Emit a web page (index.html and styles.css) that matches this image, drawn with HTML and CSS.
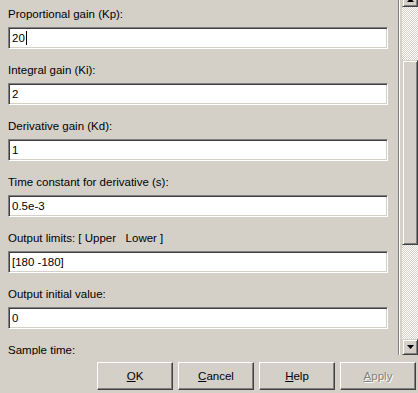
FILE: index.html
```html
<!DOCTYPE html>
<html>
<head>
<meta charset="utf-8">
<link rel="stylesheet" href="styles.css">
</head>
<body>
<div class="dialog">
  <div class="scroller">
    <div class="content">
      <div class="param"><div class="label">Proportional gain (Kp):</div><div class="field">20<span class="caret"></span></div></div>
      <div class="param"><div class="label">Integral gain (Ki):</div><div class="field">2</div></div>
      <div class="param"><div class="label">Derivative gain (Kd):</div><div class="field">1</div></div>
      <div class="param"><div class="label">Time constant for derivative (s):</div><div class="field">0.5e-3</div></div>
      <div class="param"><div class="label">Output limits: [ Upper &nbsp; Lower ]</div><div class="field">[180 -180]</div></div>
      <div class="param"><div class="label">Output initial value:</div><div class="field">0</div></div>
      <div class="param"><div class="label">Sample time:</div></div>
    </div>
    <div class="vline"></div>
    <div class="scrollbar">
      <div class="sbtn up"><svg width="7" height="4" viewBox="0 0 7 4"><path d="M3.5 0 L7 4 L0 4 Z" fill="#000"/></svg></div>
      <div class="track">
        <div class="gap-top"></div>
        <div class="thumb"></div>
        <div class="gap-bottom"></div>
      </div>
      <div class="sbtn down"><svg width="7" height="4" viewBox="0 0 7 4"><path d="M0 0 L7 0 L3.5 4 Z" fill="#000"/></svg></div>
    </div>
  </div>
  <div class="buttons">
    <div class="btn"><span class="u">O</span>K</div>
    <div class="btn"><span class="u">C</span>ancel</div>
    <div class="btn"><span class="u">H</span>elp</div>
    <div class="btn disabled"><span class="u">A</span>pply</div>
  </div>
</div>
</body>
</html>
```
FILE: styles.css
```css
html, body {
  margin: 0;
  padding: 0;
  background: #d4d0c8;
}
body {
  width: 418px;
  height: 393px;
  overflow: hidden;
  font-family: "Liberation Sans", Arial, sans-serif;
  font-size: 11.5px;
  color: #000;
}
.dialog {
  display: flex;
  flex-direction: column;
  height: 393px;
}
.scroller {
  display: flex;
  height: 355px;
  overflow: hidden;
}
.content {
  flex: 1;
  display: flex;
  flex-direction: column;
  padding: 7px 0 0 8px;
  overflow: hidden;
}
.param {
  display: flex;
  flex-direction: column;
  margin-bottom: 14px;
  flex: none;
}
.label {
  line-height: 14px;
  height: 14px;
  margin-bottom: 6px;
  white-space: nowrap;
}
.field {
  width: 375px;
  height: 20px;
  border: 1px solid;
  border-color: #808080 #fff #fff #808080;
  box-shadow: inset 1px 1px #404040, inset -1px -1px #d4d0c8;
  background: #fff;
  padding: 0 0 0 3px;
  line-height: 21px;
  white-space: nowrap;
}
.caret {
  display: inline-block;
  width: 1px;
  height: 14px;
  background: #000;
  vertical-align: -3px;
  margin-left: 1px;
}
.vline {
  width: 1px;
  background: #808080;
  margin-left: 10px;
  border-right: 1px solid #fff;
}
.scrollbar {
  width: 16px;
  margin-left: 2px;
  display: flex;
  flex-direction: column;
}
.sbtn {
  height: 14px;
  flex: none;
  border: 1px solid;
  border-color: #d4d0c8 #404040 #404040 #d4d0c8;
  box-shadow: inset 1px 1px #fff, inset -1px -1px #808080;
  background: #d4d0c8;
  display: flex;
  align-items: center;
  justify-content: center;
}
.sbtn.up {
  margin-top: -9px;
}
.sbtn.up svg { margin-top: 1px; }
.track {
  flex: 1;
  display: flex;
  flex-direction: column;
  background: repeating-conic-gradient(#fff 0 25%, #d4d0c8 0 50%) 0 0 / 2px 2px;
}
.gap-top { height: 53px; flex: none; }
.thumb {
  height: 183px;
  flex: none;
  border: 1px solid;
  border-color: #d4d0c8 #404040 #404040 #d4d0c8;
  box-shadow: inset 1px 1px #fff, inset -1px -1px #808080;
  background: #d4d0c8;
}
.gap-bottom { flex: 1; }
.buttons {
  display: flex;
  justify-content: flex-end;
  gap: 5px;
  padding: 7px 2px 0 0;
}
.btn {
  width: 74px;
  height: 26px;
  border: 1px solid;
  border-color: #fff #404040 #404040 #fff;
  box-shadow: inset -1px -1px #808080;
  display: flex;
  align-items: center;
  justify-content: center;
}
.u { text-decoration: underline; }
.btn.disabled {
  color: #808080;
  text-shadow: 1px 1px #fff;
}
```
